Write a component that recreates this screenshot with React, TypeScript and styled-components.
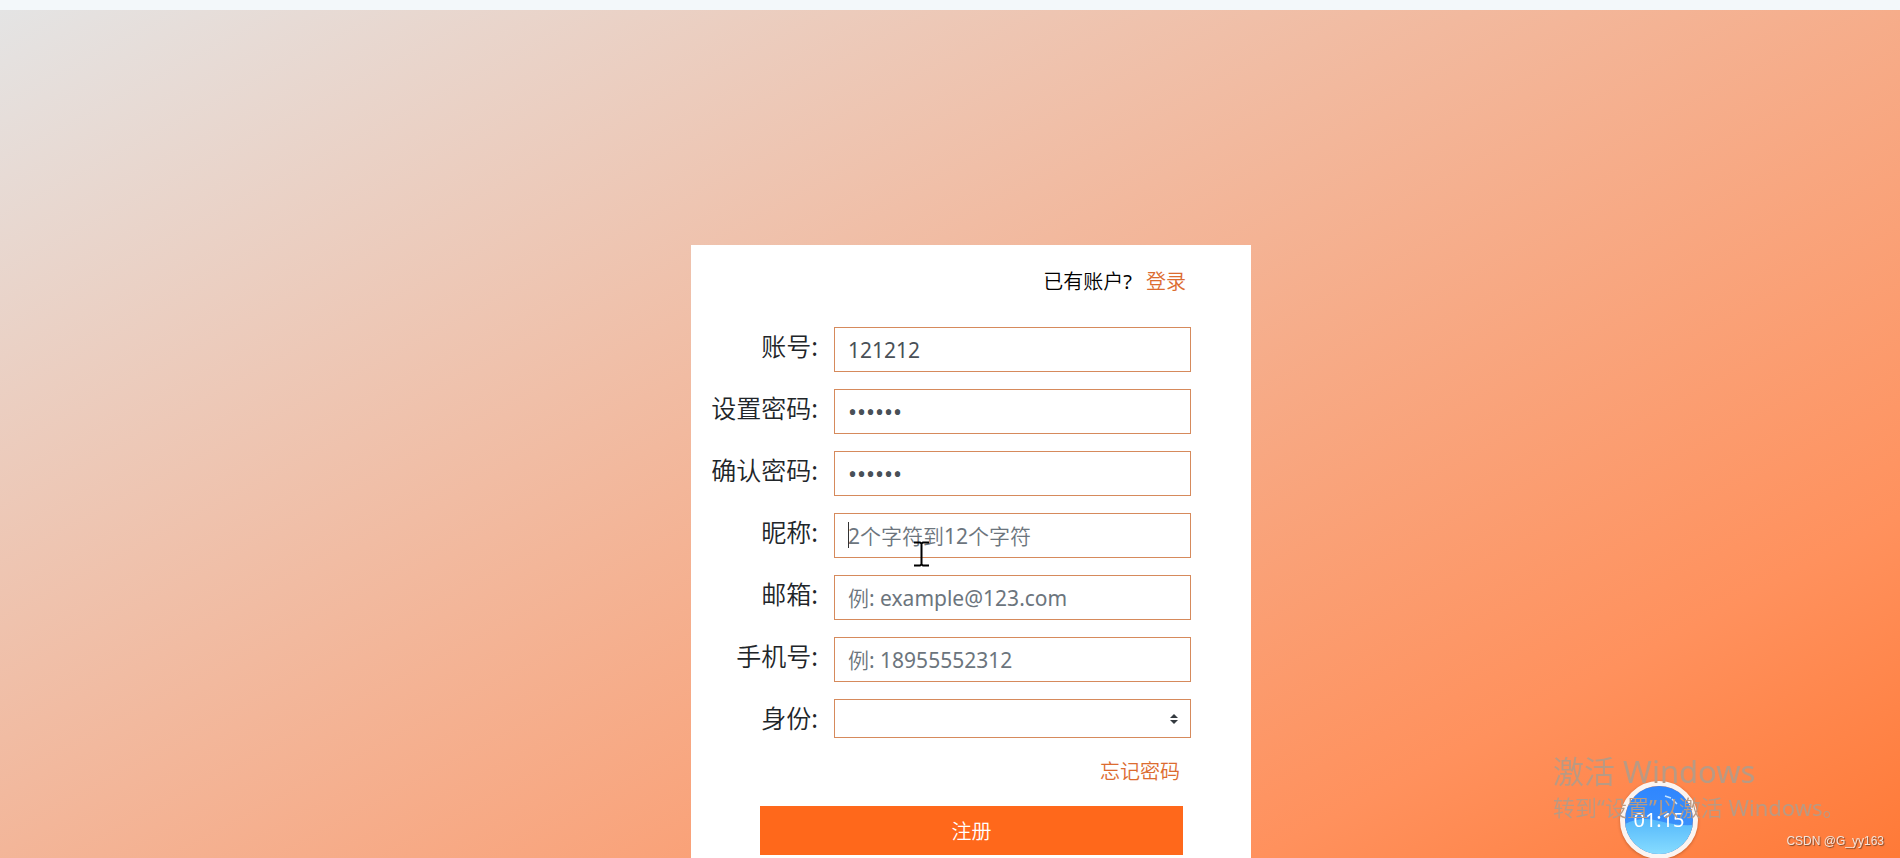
import React from "react";
import styled, { createGlobalStyle } from "styled-components";

const GlobalStyle = createGlobalStyle`
  * { box-sizing: border-box; }
  html, body, #root { height: 100%; }
  body {
    margin: 0;
    overflow: hidden;
    font-family: "Noto Sans", "Noto Sans CJK SC DemiLight", "Noto Sans CJK SC Light", "Noto Sans CJK SC", sans-serif;
    font-size: 20px;
    color: #212529;
  }
`;

const Page = styled.div`
  display: flex;
  flex-direction: column;
  height: 100vh;
  overflow: hidden;
`;

const TopStrip = styled.header`
  flex: 0 0 10px;
  background: #f3f8fa;
`;

const Main = styled.main`
  position: relative;
  flex: 1;
  display: flex;
  justify-content: center;
  padding: 235px 0 0 42px;
  background: linear-gradient(152deg, #e4e4e4, #ff915d 80%, #ff7733);
`;

const Card = styled.form`
  width: 560px;
  flex-shrink: 0;
  height: max-content;
  padding: 20px 60px 40px 16px;
  background: #fff;
`;

const Account = styled.p`
  display: flex;
  justify-content: flex-end;
  gap: 14px;
  margin: 0;
  padding-right: 5px;
  line-height: 34px;
  color: #000;
`;

const Link = styled.a`
  color: #dc6c30;
  text-decoration: none;
`;

const Fields = styled.div`
  display: grid;
  gap: 17px;
  margin-top: 28px;
`;

const Row = styled.div`
  display: grid;
  grid-template-columns: 111px 1fr;
  column-gap: 16px;
`;

const Label = styled.label`
  font-size: 25px;
  line-height: 38px;
  text-align: right;
  white-space: nowrap;
`;

const Input = styled.input`
  width: 100%;
  height: 45px;
  padding: 0 13px;
  border: 1px solid #d68a5c;
  border-radius: 0;
  outline: none;
  background: #fff;
  color: #495057;
  font-family: inherit;
  font-size: 21px;
  &[type="password"] { font-size: 24px; }
  &::placeholder {
    color: #6c757d;
    opacity: 1;
  }
`;

const SelectBox = styled.div`
  display: grid;
  align-items: center;
  & > * { grid-area: 1 / 1; }
  & > svg { justify-self: end; margin-right: 13px; pointer-events: none; }
`;

const Select = styled.select`
  width: 100%;
  height: 39px;
  padding: 0 36px 0 13px;
  border: 1px solid #d68a5c;
  border-radius: 0;
  appearance: none;
  background: #fff;
  color: #495057;
  font: inherit;
`;

const Forgot = styled.div`
  margin-top: 18px;
  padding-right: 11px;
  line-height: 32px;
  text-align: right;
`;

const Submit = styled.button`
  display: block;
  width: 423px;
  height: 49px;
  margin: 18px 8px 0 auto;
  padding: 0;
  border: 0;
  background: #ff681b;
  color: #fff;
  font: inherit;
`;

const Caret = styled.i`
  position: absolute;
  left: 14px;
  top: 9px;
  width: 1px;
  height: 26px;
  background: #333;
`;

const Field = styled.div`
  position: relative;
`;

const Pointer = styled.svg`
  position: absolute;
  left: 80px;
  top: 28px;
`;

const Overlay = styled.aside`
  position: fixed;
  right: 60px;
  bottom: 34px;
  width: 287px;
  white-space: nowrap;
  color: #b89a84;
`;

const WatermarkTitle = styled.div`
  font-size: 31px;
  line-height: 38px;
`;

const WatermarkText = styled.div`
  font-size: 22px;
  line-height: 34px;
`;

const Timer = styled.div`
  position: fixed;
  right: 202px;
  bottom: -1px;
  width: 78px;
  height: 78px;
  border: 5px solid #fbf4f1;
  border-radius: 50%;
  display: grid;
  place-items: center;
  overflow: hidden;
  box-shadow: 0 1px 3px rgba(100, 50, 20, 0.4);
  color: #fff;
  line-height: 24px;
  & > * { grid-area: 1 / 1; }
`;

const Credit = styled.div`
  position: fixed;
  right: 16px;
  bottom: 9px;
  font: 12px/16px "Liberation Sans", sans-serif;
  color: #f7e3d8;
  text-shadow: 1px 1px 1px #7a4a30;
`;

type Item = { id: string; label: string; type?: string; value?: string; hint?: string; active?: boolean };

const items: Item[] = [
  { id: "account", label: "账号", value: "121212" },
  { id: "password", label: "设置密码", type: "password", value: "121212" },
  { id: "confirm", label: "确认密码", type: "password", value: "121212" },
  { id: "nickname", label: "昵称", hint: "2个字符到12个字符", active: true },
  { id: "email", label: "邮箱", type: "email", hint: "例: example@123.com" },
  { id: "phone", label: "手机号", type: "tel", hint: "例: 18955552312" },
];

export default function App() {
  return (
    <Page>
      <GlobalStyle />
      <TopStrip />
      <Main>
        <Card onSubmit={(e) => e.preventDefault()}>
          <Account>
            <span>已有账户?</span>
            <Link href="#login">登录</Link>
          </Account>
          <Fields>
            {items.map((f) => (
              <Row key={f.id}>
                <Label htmlFor={f.id}>{f.label}:</Label>
                <Field>
                  <Input id={f.id} type={f.type ?? "text"} defaultValue={f.value} placeholder={f.hint} />
                  {f.active && (
                    <>
                      <Caret />
                      <Pointer width="15" height="26" viewBox="0 0 15 26" aria-hidden="true">
                        <path d="M0 1.5h6l1.500 1 1.500-1h6M7.500 2v22M0 24.500h6l1.500-1 1.500 1h6" fill="none" stroke="#000" strokeWidth="2" />
                      </Pointer>
                    </>
                  )}
                </Field>
              </Row>
            ))}
            <Row>
              <Label htmlFor="role">身份:</Label>
              <SelectBox>
                <Select id="role" defaultValue="">
                  <option value="" />
                </Select>
                <svg width="8" height="10" viewBox="0 0 4 5" aria-hidden="true">
                  <path fill="#343a40" d="M2 0L0 2h4zm0 5L0 3h4z" />
                </svg>
              </SelectBox>
            </Row>
          </Fields>
          <Forgot>
            <Link href="#forgot">忘记密码</Link>
          </Forgot>
          <Submit type="submit">注册</Submit>
        </Card>
        <Timer>
          <svg width="68" height="68" viewBox="0 0 68 68" aria-hidden="true">
            <defs>
              <linearGradient id="sky" x1="0" y1="0" x2="0" y2="1">
                <stop offset="0" stopColor="#2f86ff" />
                <stop offset="1" stopColor="#4296f8" />
              </linearGradient>
              <linearGradient id="sea" x1="0" y1="0" x2="0" y2="1">
                <stop offset="0" stopColor="#55b8fb" />
                <stop offset="1" stopColor="#86dcff" />
              </linearGradient>
            </defs>
            <rect width="68" height="68" fill="url(#sky)" />
            <path d="M0 38Q16 30 34 35T68 39V68H0z" fill="url(#sea)" />
            <path d="M40 10l6 2M47 13l5 5" stroke="#c4e2ff" strokeWidth="1.500" fill="none" />
          </svg>
          <span>01:15</span>
        </Timer>
        <Overlay>
          <WatermarkTitle>激活 Windows</WatermarkTitle>
          <WatermarkText>转到“设置”以激活 Windows。</WatermarkText>
        </Overlay>
        <Credit>CSDN @G_yy163</Credit>
      </Main>
    </Page>
  );
}
